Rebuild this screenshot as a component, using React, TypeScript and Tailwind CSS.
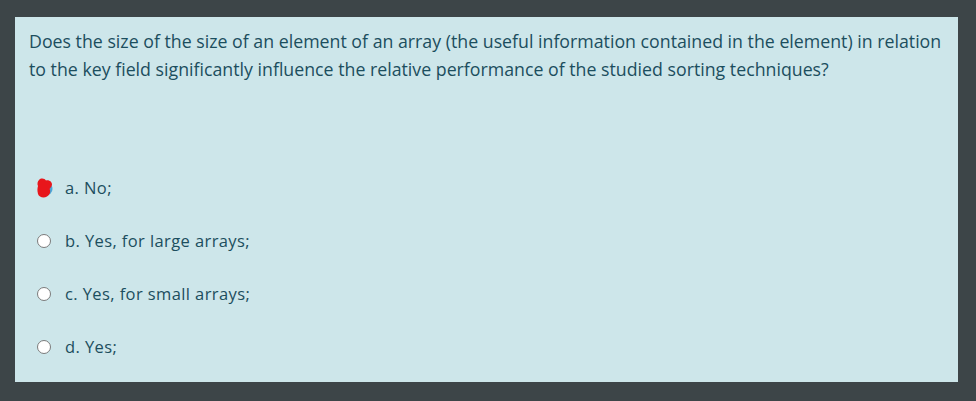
import React from 'react';

const options = ['a. No;', 'b. Yes, for large arrays;', 'c. Yes, for small arrays;', 'd. Yes;'];

function Radio({ marked }: { marked?: boolean }) {
  if (marked) {
    // selected radio scribbled over in red
    return (
      <svg width="18" height="22" viewBox="0 0 18 22" className="shrink-0 -ml-[1px] -mr-[3px]">
        <ellipse cx="10" cy="12" rx="6.5" ry="6.5" fill="#4aa6d8" />
        <path d="M3 3 C5 0.5, 9 1.5, 10 3.5 C12 2.5, 16 4, 16 7.5 C16 10, 14 11, 13.5 12 C15 14, 14 18, 11 19.5 C8 21.5, 3 20.5, 2 17 C1 13, 1.5 11, 2 9 C1 7, 1.5 4.5, 3 3 Z" fill="#e8161b" />
      </svg>
    );
  }
  return <span className="block w-[14px] h-[14px] shrink-0 rounded-full bg-white border-[1.5px] border-[#7b7b7b]" />;
}

export default function App() {
  return (
    <div className="w-[976px] h-[401px] bg-[#3d4548] pt-[17px] pl-[15px]" style={{ fontFamily: '"Open Sans", sans-serif' }}>
      <div className="w-[943px] h-[365px] bg-[#cde6ea] text-[#1c4e5e] px-[14px] pt-[10px]">
        <p className="text-[17.75px] leading-[28px]">
          Does the size of the size of an element of an array (the useful information contained in the element) in relation to the key field significantly influence the relative performance of the studied sorting techniques?
        </p>
        <div className="mt-[95px] flex flex-col gap-[33px] pl-[8px]">
          {options.map((o, i) => (
            <div key={o} className="flex items-center gap-[14px] h-[20px]">
              <Radio marked={i === 0} />
              <span className="text-[16.5px] tracking-[0.4px]">{o}</span>
            </div>
          ))}
        </div>
      </div>
    </div>
  );
}
